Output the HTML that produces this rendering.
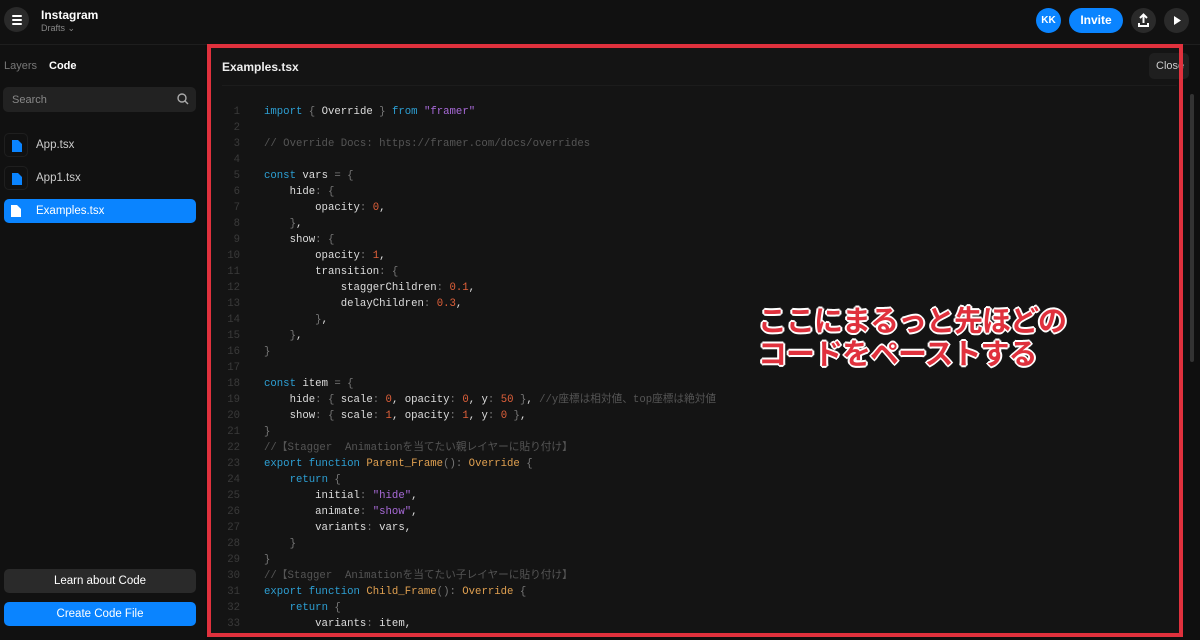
<!DOCTYPE html>
<html><head><meta charset="utf-8"><style>
*{margin:0;padding:0;box-sizing:border-box}
body{width:1200px;height:640px;overflow:hidden;background:#0f0f0f;font-family:"Liberation Sans","Noto Sans CJK JP",sans-serif;color:#fff;position:relative}
.top{position:absolute;left:0;top:0;width:1200px;height:45px;border-bottom:1px solid #1e1e1e;background:#111}
.menu{position:absolute;left:4px;top:7px;width:25px;height:25px;border-radius:50%;background:#2a2a2a}
.menu i{position:absolute;left:8px;width:10px;height:2px;background:#fff;border-radius:1px}
.abs{position:absolute}
.side{position:absolute;left:0;top:45px;width:205px;height:595px;background:#111}
.file{position:absolute;left:4px;width:192px;height:24px;border-radius:5px;font-size:11.5px;color:#ccc}
.file .ic{position:absolute;left:0;top:0;width:24px;height:24px;border-radius:5px;border:1px solid #1f1f1f}
.file svg{position:absolute;left:7px;top:6px}
.file span{position:absolute;left:32px;top:6px}
.btn{position:absolute;left:4px;width:192px;height:24px;border-radius:5px;font-size:11.5px;text-align:center;line-height:25px}
.red{position:absolute;left:207px;top:44px;width:976px;height:593px;border:4px solid #e0313d}
.panel{position:absolute;left:211px;top:48px;width:968px;height:585px;background:#141414}
.code{position:absolute;left:0;top:104px;font-family:"Liberation Mono","Noto Sans CJK JP",monospace;font-size:10.67px;line-height:16px;color:#ddd;white-space:pre}
.ln{position:absolute;left:218px;width:22px;text-align:right;color:#3a3a3a}
.k{color:#2d9fd3}.s{color:#a86ad8}.n{color:#e0603a}.c{color:#555}.f{color:#e0a050}.p{color:#777}
.big{position:absolute;left:758px;top:303px;font-size:29px;font-weight:bold;color:#e0313d;line-height:33px;font-family:"Noto Sans CJK JP",sans-serif;text-shadow:0 0 2px #fff,1px 1px 0 #fff,-1px -1px 0 #fff,1px -1px 0 #fff,-1px 1px 0 #fff,2px 0 0 #fff,-2px 0 0 #fff,0 2px 0 #fff,0 -2px 0 #fff;letter-spacing:-1px}
</style></head><body>
<div class="top">
 <div class="menu"><i style="top:8px"></i><i style="top:12px"></i><i style="top:16px"></i></div>
 <div class="abs" style="left:41px;top:8px;font-size:12px;font-weight:bold">Instagram</div>
 <div class="abs" style="left:41px;top:23px;font-size:9px;color:#888">Drafts ⌄</div>
 <div class="abs" style="left:1036px;top:8px;width:25px;height:25px;border-radius:50%;background:#0a84ff;font-size:10px;font-weight:bold;text-align:center;line-height:25px">KK</div>
 <div class="abs" style="left:1069px;top:8px;width:54px;height:25px;border-radius:13px;background:#0a84ff;font-size:12px;font-weight:bold;text-align:center;line-height:25px">Invite</div>
 <div class="abs" style="left:1131px;top:8px;width:25px;height:25px;border-radius:50%;background:#2a2a2a"><svg width="25" height="25"><path d="M12.5 7v8M9 10l3.5-3.5L16 10M8 15v3h9v-3" stroke="#fff" stroke-width="2" fill="none"/></svg></div>
 <div class="abs" style="left:1164px;top:8px;width:25px;height:25px;border-radius:50%;background:#2a2a2a"><svg width="25" height="25"><path d="M10 8l7 4.5-7 4.5z" fill="#fff"/></svg></div>
</div>
<div class="side">
 <div class="abs" style="left:4px;top:15px;font-size:11px;color:#777">Layers</div>
 <div class="abs" style="left:49px;top:15px;font-size:11px;font-weight:bold">Code</div>
 <div class="abs" style="left:3px;top:42px;width:193px;height:25px;border-radius:5px;background:#222;font-size:11px;color:#888;padding:7px 9px">Search<svg class="abs" style="left:174px;top:6px" width="12" height="12"><circle cx="5" cy="5" r="4" stroke="#aaa" stroke-width="1.4" fill="none"/><path d="M8 8l3 3" stroke="#aaa" stroke-width="1.4"/></svg></div>
 <div class="file" style="top:88px"><div class="ic"><svg width="10" height="12"><path d="M0 0h6l4 4v8H0z" fill="#0a84ff"/></svg></div><span>App.tsx</span></div>
 <div class="file" style="top:121px"><div class="ic"><svg width="10" height="12"><path d="M0 0h6l4 4v8H0z" fill="#0a84ff"/></svg></div><span>App1.tsx</span></div>
 <div class="file" style="top:154px;background:#0a84ff;color:#fff"><svg width="10" height="12"><path d="M0 0h6l4 4v8H0z" fill="#fff"/></svg><span>Examples.tsx</span></div>
 <div class="btn" style="top:524px;background:#2a2a2a">Learn about Code</div>
 <div class="btn" style="top:557px;background:#0a84ff">Create Code File</div>
</div>
<div class="panel">
 <div class="abs" style="left:11px;top:12px;font-size:12px;font-weight:bold;color:#eee">Examples.tsx</div>
 <div class="abs" style="left:11px;top:37px;width:955px;height:1px;background:#1c1c1c"></div>
 <div class="abs" style="left:938px;top:5px;width:40px;height:26px;border-radius:5px;background:#1f1f1f;font-size:11px;color:#ccc;padding:7px 7px">Close</div>
 <div class="abs" style="left:979px;top:46px;width:4px;height:268px;border-radius:2px;background:#333"></div>
</div>
<div class="red"></div>
<div class="code"><div class="ln">1
2
3
4
5
6
7
8
9
10
11
12
13
14
15
16
17
18
19
20
21
22
23
24
25
26
27
28
29
30
31
32
33</div><div style="position:absolute;left:264px;top:0"><span class="k">import</span> <span class="p">{</span> Override <span class="p">}</span> <span class="k">from</span> <span class="s">"framer"</span>

<span class="c">// Override Docs: https://framer.com/docs/overrides</span>

<span class="k">const</span> vars <span class="p">= {</span>
    hide<span class="p">: {</span>
        opacity<span class="p">:</span> <span class="n">0</span>,
    <span class="p">}</span>,
    show<span class="p">: {</span>
        opacity<span class="p">:</span> <span class="n">1</span>,
        transition<span class="p">: {</span>
            staggerChildren<span class="p">:</span> <span class="n">0.1</span>,
            delayChildren<span class="p">:</span> <span class="n">0.3</span>,
        <span class="p">}</span>,
    <span class="p">}</span>,
<span class="p">}</span>

<span class="k">const</span> item <span class="p">= {</span>
    hide<span class="p">: {</span> scale<span class="p">:</span> <span class="n">0</span>, opacity<span class="p">:</span> <span class="n">0</span>, y<span class="p">:</span> <span class="n">50</span> <span class="p">}</span>, <span class="c">//y座標は相対値、top座標は絶対値</span>
    show<span class="p">: {</span> scale<span class="p">:</span> <span class="n">1</span>, opacity<span class="p">:</span> <span class="n">1</span>, y<span class="p">:</span> <span class="n">0</span> <span class="p">}</span>,
<span class="p">}</span>
<span class="c">//【Stagger  Animationを当てたい親レイヤーに貼り付け】</span>
<span class="k">export function</span> <span class="f">Parent_Frame</span><span class="p">():</span> <span class="f">Override</span> <span class="p">{</span>
    <span class="k">return</span> <span class="p">{</span>
        initial<span class="p">:</span> <span class="s">"hide"</span>,
        animate<span class="p">:</span> <span class="s">"show"</span>,
        variants<span class="p">:</span> vars,
    <span class="p">}</span>
<span class="p">}</span>
<span class="c">//【Stagger  Animationを当てたい子レイヤーに貼り付け】</span>
<span class="k">export function</span> <span class="f">Child_Frame</span><span class="p">():</span> <span class="f">Override</span> <span class="p">{</span>
    <span class="k">return</span> <span class="p">{</span>
        variants<span class="p">:</span> item,</div></div>
<div class="big">ここにまるっと先ほどの<br>コードをペーストする</div>
</body></html>
